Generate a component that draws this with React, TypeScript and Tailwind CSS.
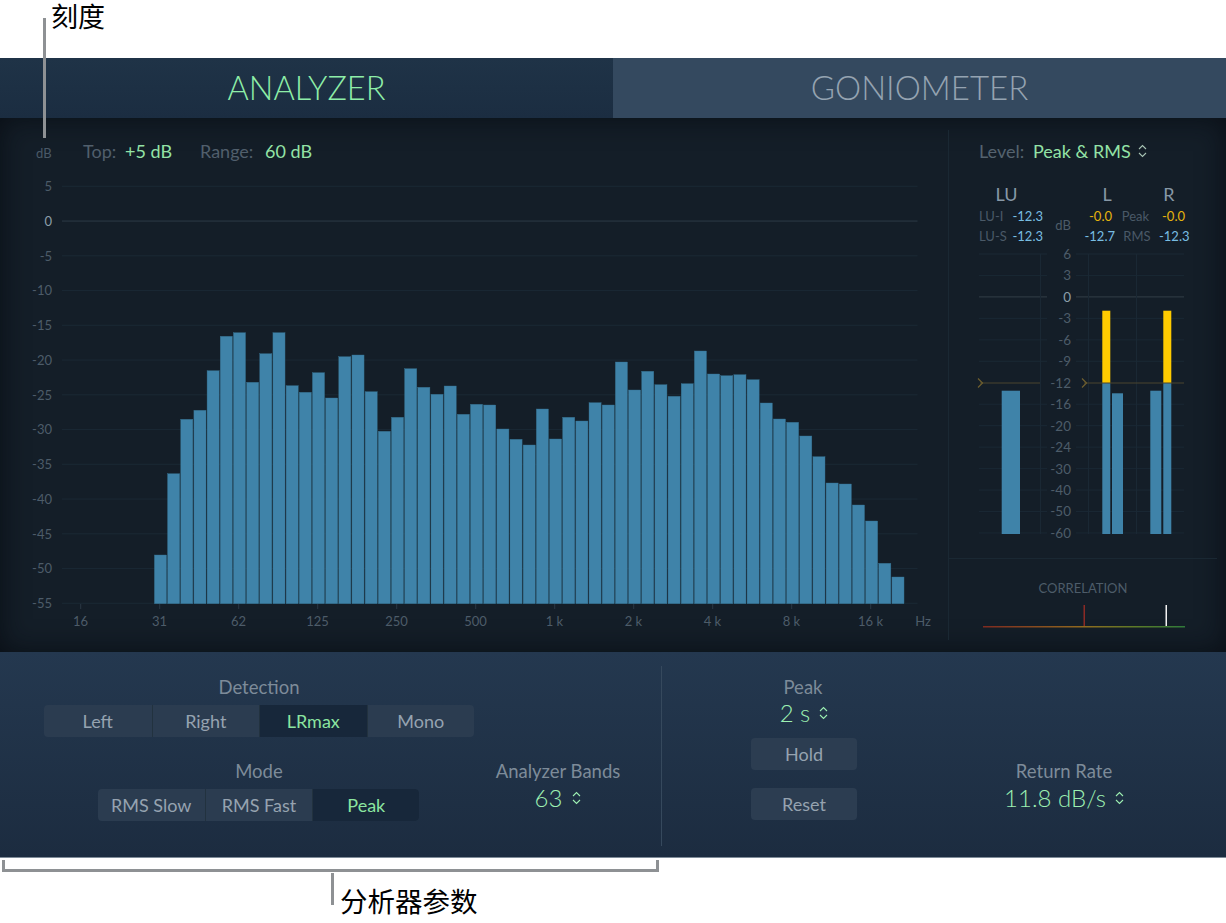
import React from "react";

const tops = [555,473.7,419.3,410.3,370.7,336.3,332.7,382.3,353.7,332.7,385.7,392.3,372.7,398,356.7,355,391.7,431.3,417.3,368.7,387.3,394.3,386,414.3,404.3,405,429,439.3,445,409,439,417.3,421,402.7,405,362,390,371.3,384.7,396.3,383.7,351,374,375.7,374.7,379.7,403,419,422.3,436,456.7,483,484,505,521,563.3,577];
const dbLabels = ["5","0","-5","-10","-15","-20","-25","-30","-35","-40","-45","-50","-55"];
const freq = ["16","31","62","125","250","500","1 k","2 k","4 k","8 k","16 k"];
const meterScale = ["6","3","0","-3","-6","-9","-12","-16","-20","-24","-30","-40","-50","-60"];
const BASE = 254;
const STEP = 21.46;

function Updown({ className = "" }: { className?: string }) {
  return (
    <svg width="9" height="14" viewBox="0 0 9 14" className={className} fill="none" stroke="currentColor" strokeWidth="1.1">
      <path d="M1 5 L4.5 1.5 L8 5" />
      <path d="M1 9 L4.5 12.5 L8 9" />
    </svg>
  );
}

function Chart() {
  const ox = 62, oy = 178;
  return (
    <svg width="860" height="435" className="block shrink-0" viewBox={`${ox} ${oy} 860 435`}>
      {dbLabels.map((l, i) => {
        const y = 186.3 + i * 34.75;
        return <line key={l} x1="62" x2="917.5" y1={y} y2={y} stroke={l === "0" ? "#2c3b45" : "#1a2834"} strokeWidth="1" />;
      })}
      {freq.map((f, i) => (
        <line key={f} x1={80.7 + i * 79} x2={80.7 + i * 79} y1="604" y2="609" stroke="#2a3844" />
      ))}
      {tops.map((t, i) => {
        const x = 154.4 + i * 13.17;
        return <rect key={i} x={x} y={t} width="12.1" height={603.7 - t} fill="#3f83a9" stroke="#36708f" strokeWidth="0.4" />;
      })}
    </svg>
  );
}

function LuMeter() {
  return (
    <svg width="72" height="296" viewBox="975 246 72 296" className="block shrink-0">
      {meterScale.map((l, i) => {
        const y = BASE + i * STEP;
        if (l === "-12") return null;
        return <line key={l} x1="979" x2="1047" y1={y} y2={y} stroke={l === "0" ? "#333f48" : "#1a2834"} />;
      })}
      <line x1="1040.5" x2="1040.5" y1="254" y2="534" stroke="#1a2834" />
      <rect x="1001.7" y="390.7" width="18.3" height="143.3" fill="#3f83a9" />
      <line x1="980" x2="1040" y1="383" y2="383" stroke="#4a452e" />
      <path d="M978 378.5 L982.5 383 L978 387.5" fill="none" stroke="#6e5f2f" strokeWidth="1.2" />
    </svg>
  );
}

function LrMeter() {
  return (
    <svg width="114" height="296" viewBox="1076 246 114 296" className="block shrink-0">
      {meterScale.map((l, i) => {
        const y = BASE + i * STEP;
        if (l === "-12") return null;
        return <line key={l} x1="1076" x2="1184" y1={y} y2={y} stroke={l === "0" ? "#333f48" : "#1a2834"} />;
      })}
      <line x1="1088.5" x2="1088.5" y1="254" y2="534" stroke="#1a2834" />
      <line x1="1136.5" x2="1136.5" y1="254" y2="534" stroke="#1a2834" />
      <rect x="1102.3" y="310.7" width="8" height="72.3" fill="#ffcb00" />
      <rect x="1102.3" y="383" width="8" height="151" fill="#3f83a9" />
      <rect x="1112" y="393.3" width="11" height="140.7" fill="#3f83a9" />
      <rect x="1150.3" y="390.7" width="11" height="143.3" fill="#3f83a9" />
      <rect x="1163.3" y="310.7" width="8" height="72.3" fill="#ffcb00" />
      <rect x="1163.3" y="383" width="8" height="151" fill="#3f83a9" />
      <line x1="1084" x2="1184" y1="383" y2="383" stroke="#4a452e" />
      <path d="M1082 378.5 L1086.5 383 L1082 387.5" fill="none" stroke="#6e5f2f" strokeWidth="1.2" />
    </svg>
  );
}

function Segments({ items, active, w }: { items: string[]; active: string; w: string }) {
  return (
    <div className="flex h-8 rounded-[4px] overflow-hidden bg-[#2b3c50]">
      {items.map((it, i) => (
        <div
          key={it}
          className={`${w} flex items-center justify-center text-[18px] ${i > 0 ? "border-l border-[#22323f]" : ""} ${it === active ? "bg-[#17273a] text-[#8be5a0]" : "text-[#96a3b0]"}`}
        >
          {it}
        </div>
      ))}
    </div>
  );
}

function PushButton({ label }: { label: string }) {
  return <div className="w-[106px] h-8 rounded-[4px] bg-[#2c3d51] text-[#96a3b0] text-[18px] flex items-center justify-center">{label}</div>;
}

export default function App() {
  const font = { fontFamily: 'Lato, "Noto Sans CJK SC", sans-serif' };
  return (
    <div className="w-[1226px] h-[923px] bg-white relative overflow-hidden" style={font}>
      {/* top annotation */}
      <div className="h-[58px] pl-[51px] text-[27px] leading-[31px] text-black" style={{ fontFamily: '"Noto Sans CJK SC", sans-serif' }}>
        刻度
      </div>
      <div className="absolute left-[43px] top-[18px] w-[3px] h-[120px] bg-[#8e9194]" />

      {/* tabs */}
      <div className="h-[60px] flex font-light">
        <div className="w-[613px] text-[32.5px] bg-gradient-to-b from-[#1f3347] to-[#1b2d41] text-[#8eeea8] flex items-center justify-center">ANALYZER</div>
        <div className="flex-1 text-[33px] bg-[#34495f] text-[#95a3b1] flex items-center justify-center">GONIOMETER</div>
      </div>

      {/* display */}
      <div className="h-[534px] flex bg-[#141e28] shadow-[inset_0_0_28px_rgba(6,10,15,0.75)]">
        <div className="w-[948px] flex flex-col shrink-0">
          <div className="h-[60px] pl-[36px] pt-[21px] flex items-start">
            <span className="w-[47px] pt-[6px] text-[13px] leading-4 text-[#4a5967]">dB</span>
            <div className="flex text-[18px] leading-[24px]">
              <span className="w-[42px] text-[#515f6c]">Top:</span>
              <span className="w-[75px] text-[#93e3a6]">+5 dB</span>
              <span className="w-[65px] text-[#515f6c]">Range:</span>
              <span className="text-[#93e3a6]">60 dB</span>
            </div>
          </div>
          <div className="flex">
            <div className="w-[52px] h-[433px] self-start flex flex-col justify-between items-end shrink-0">
              {dbLabels.map((l) => (
                <span key={l} className={`h-4 leading-4 text-[13px] ${l === "0" ? "text-[#8d9ea8]" : "text-[#4d5c69]"}`}>{l}</span>
              ))}
            </div>
            <div className="w-[10px] shrink-0" />
            <Chart />
          </div>
          <div className="flex pl-[41px] text-[13px] leading-4 text-[#4d5c69]">
            {freq.map((f) => (
              <span key={f} className="w-[79px] text-center">{f}</span>
            ))}
            <span className="w-[26px] text-center">Hz</span>
          </div>
        </div>

        <div className="flex-1 flex flex-col my-[12px]">
          <div className="h-[428px] border-l border-[#1a2833] flex flex-col">
            <div className="pl-[30px] pt-[9px] h-[52px] flex items-start text-[18px] leading-[24px]">
              <span className="w-[54px] text-[#55636f]">Level:</span>
              <span className="text-[#93e3a6]">Peak &amp; RMS</span>
              <Updown className="ml-[7px] mt-[5px] text-[#a8c4b4]" />
            </div>
            <div className="flex h-[24px] text-[18px] leading-[24px] text-[#8798a6]">
              <span className="ml-[30px] w-[55px] text-center">LU</span>
              <span className="ml-[53px] w-[40px] text-center">L</span>
              <span className="ml-[22px] w-[40px] text-center">R</span>
            </div>
            <div className="flex pl-[30px] h-[40px] text-[13px] leading-[20px]">
              <div className="w-[64px] flex flex-col">
                <div className="flex justify-between"><span className="text-[#4a5967]">LU-I</span><span className="text-[#78bde2]">-12.3</span></div>
                <div className="flex justify-between"><span className="text-[#4a5967]">LU-S</span><span className="text-[#78bde2]">-12.3</span></div>
              </div>
              <div className="w-[40px] text-center pt-[9px] text-[#4d5c69]">dB</div>
              <div className="w-[102px] flex flex-col">
                <div className="flex"><span className="w-[29px] text-right text-[#e5b40d]">-0.0</span><span className="w-[47px] text-center text-[#4a5967]">Peak</span><span className="w-[26px] text-right text-[#e5b40d]">-0.0</span></div>
                <div className="flex"><span className="w-[32px] text-right text-[#78bde2] whitespace-nowrap">-12.7</span><span className="w-[44px] text-center text-[#4a5967]">RMS</span><span className="w-[26px] text-right text-[#78bde2] whitespace-nowrap">-12.3</span></div>
              </div>
            </div>
            <div className="flex pl-[26px] h-[296px]">
              <LuMeter />
              <div className="w-[24px] mr-[5px] mt-[1px] h-[293px] flex flex-col justify-between items-end shrink-0">
                {meterScale.map((l) => (
                  <span key={l} className={`h-[14px] leading-[14px] text-[13.5px] ${l === "0" ? "text-[#8d9ea8]" : "text-[#4d5c69]"}`}>{l}</span>
                ))}
              </div>
              <LrMeter />
            </div>
          </div>
          <div className="h-[82px] border-l border-t border-[#1a2833] mr-[16px] flex flex-col">
            <div className="w-[268px] pt-[21px] text-[13px] leading-4 text-center text-[#4d5c69]">CORRELATION</div>
            <svg width="210" height="24" viewBox="980 606 210 24" className="block mt-[9px] ml-[31px]">
              <defs>
                <linearGradient id="cg" x1="0" x2="1" y1="0" y2="0">
                  <stop offset="0" stopColor="#7e2a20" />
                  <stop offset="0.5" stopColor="#8f6a1e" />
                  <stop offset="0.75" stopColor="#5d7a27" />
                  <stop offset="1" stopColor="#2f7a3a" />
                </linearGradient>
              </defs>
              <rect x="983" y="627" width="202" height="1.5" fill="url(#cg)" />
              <rect x="1083.5" y="606" width="1.5" height="21" fill="#8b2a25" />
              <rect x="1165.5" y="606" width="1.5" height="21" fill="#f2f2f2" />
            </svg>
          </div>
        </div>
      </div>

      {/* controls */}
      <div className="h-[206px] flex bg-gradient-to-b from-[#24384f] to-[#1c2c40] pt-[14px] border-b border-[#7f8c99]">
        <div className="w-[662px] h-[180px] border-r border-[#36495d] shrink-0 flex pl-[44px]">
          <div className="w-[430px] flex flex-col items-center">
            <div className="h-[39px] pt-[13px] leading-[16px] text-[18.5px] text-[#7d8b99]">Detection</div>
            <div className="h-[58px]">
              <Segments items={["Left", "Right", "LRmax", "Mono"]} active="LRmax" w="w-[107.5px]" />
            </div>
            <div className="h-[26px] leading-[16px] text-[18.5px] text-[#7d8b99]">Mode</div>
            <div className="-ml-[1px]">
              <Segments items={["RMS Slow", "RMS Fast", "Peak"]} active="Peak" w="w-[107.3px]" />
            </div>
          </div>
          <div className="w-[148px] ml-[10px] pt-[95px] flex flex-col items-center">
            <div className="leading-5 text-[18.5px] text-[#7d8b99] whitespace-nowrap">Analyzer Bands</div>
            <div className="flex items-center gap-[10px] text-[#9df0b2] text-[24px] font-light leading-[34px]">
              <span>63</span>
              <Updown />
            </div>
          </div>
        </div>
        <div className="w-[284px] shrink-0 flex flex-col items-center">
          <div className="pt-[13px] pr-[2px] leading-[16px] text-[18.5px] text-[#7d8b99]">Peak</div>
          <div className="flex items-center gap-[9px] text-[#9df0b2] text-[24px] font-light leading-[34px] h-[34px] mt-[1px]">
            <span>2 s</span>
            <Updown />
          </div>
          <div className="mt-[8px]"><PushButton label="Hold" /></div>
          <div className="mt-[18px]"><PushButton label="Reset" /></div>
        </div>
        <div className="flex-1 pt-[95px] flex flex-col items-center pr-[44px]">
          <div className="leading-5 text-[18.5px] text-[#7d8b99]">Return Rate</div>
          <div className="flex items-center gap-[9px] text-[#9df0b2] text-[24px] font-light leading-[34px]">
            <span>11.8 dB/s</span>
            <Updown />
          </div>
        </div>
      </div>

      {/* bottom annotation */}
      <div className="relative">
        <div className="mt-[2px] ml-[2px] w-[657px] h-[12px] border-[3px] border-t-0 border-[#8e9194]" />
        <div className="absolute left-[331px] top-[13px] w-[3px] h-[32px] bg-[#8e9194]" />
        <div className="pl-[340px] pt-[12px] text-[27.5px] leading-[33px] text-black" style={{ fontFamily: '"Noto Sans CJK SC", sans-serif' }}>
          分析器参数
        </div>
      </div>
    </div>
  );
}
